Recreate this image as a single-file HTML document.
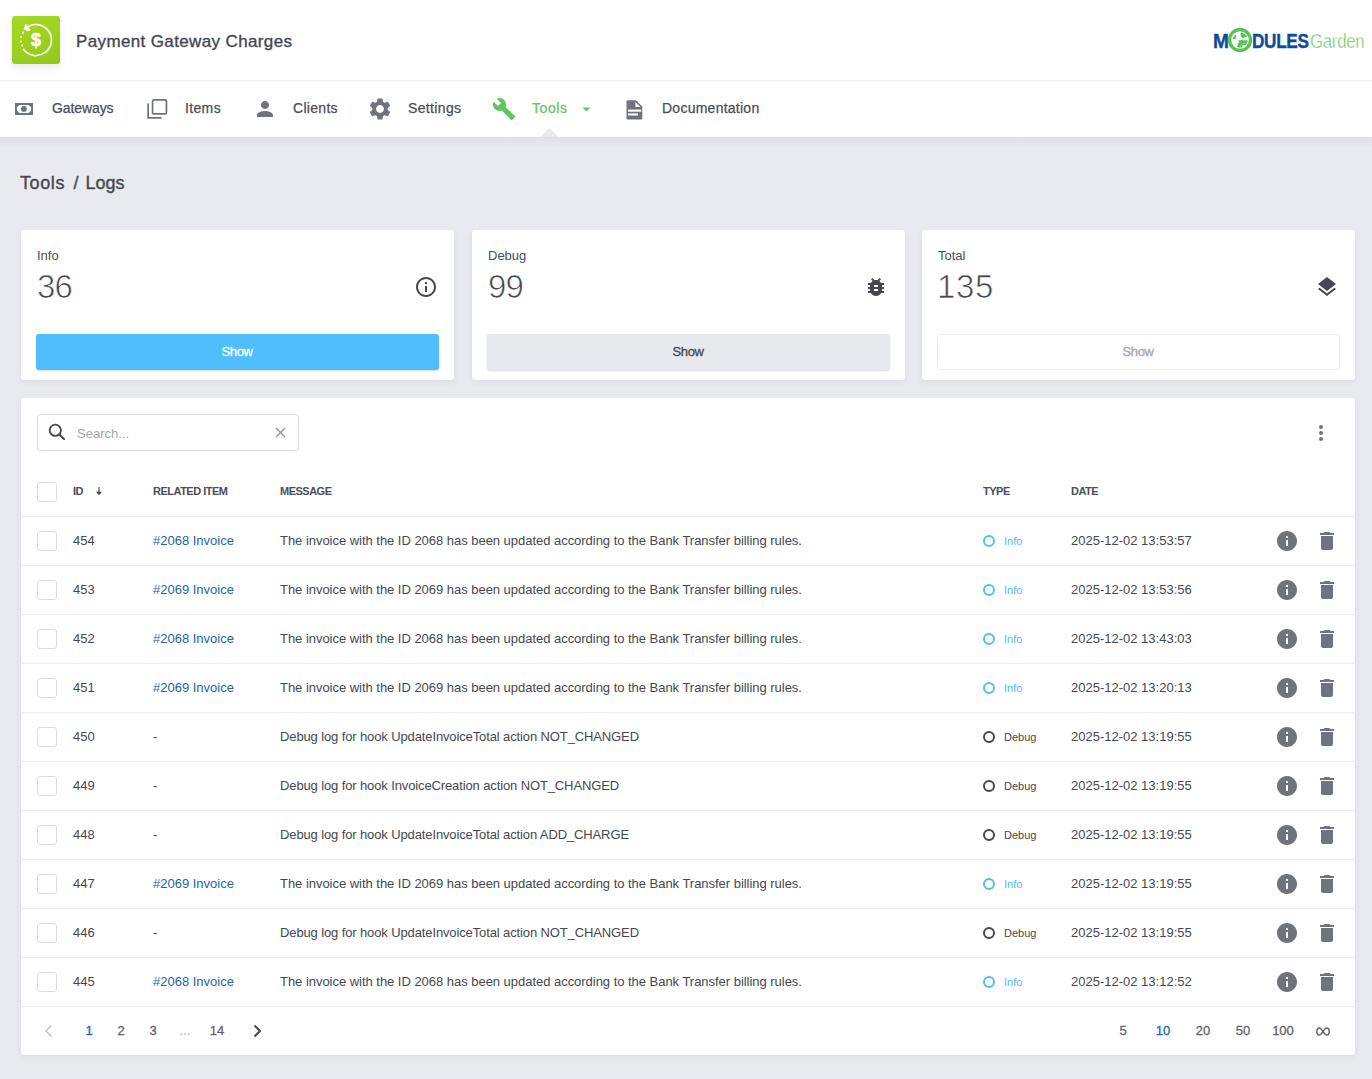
<!DOCTYPE html>
<html><head><meta charset="utf-8">
<style>
*{box-sizing:border-box;margin:0;padding:0}
html,body{width:1372px;height:1079px;overflow:hidden}
body{background:#e9eaef;font-family:"Liberation Sans",sans-serif;color:#45484f;position:relative}
.abs{position:absolute}
.t{position:absolute;white-space:nowrap;line-height:1}
#hdr{position:absolute;left:0;top:0;width:1372px;height:81px;background:#fff;border-bottom:1px solid #ececf0}
#nav{position:absolute;left:0;top:81px;width:1372px;height:56px;background:#fff}
.logo{position:absolute;left:12px;top:16px;width:48px;height:48px;border-radius:3px;background:linear-gradient(160deg,#a6da22,#92c81d);box-shadow:0 4px 8px rgba(0,0,0,.08)}
.nav-t{font-size:14px;color:#4b4e57;-webkit-text-stroke:0.25px currentColor;letter-spacing:-0.1px}
.med{-webkit-text-stroke:0.35px currentColor}
.ico{position:absolute;fill:#6f737c}
.card{position:absolute;top:230px;width:433px;height:150px;background:#fff;border-radius:3px;box-shadow:0 2px 7px rgba(30,35,60,.06)}
.card .lbl{position:absolute;left:16px;top:19px;font-size:13px;color:#4b4e57;line-height:1}
.card .num{position:absolute;left:16px;top:40px;font-size:33px;color:#45484f;line-height:1;letter-spacing:-0.9px;-webkit-text-stroke:0.7px #fff}
.btn{position:absolute;left:15px;top:104px;width:403px;height:36px;border-radius:3px;font-size:13px;text-align:center;line-height:35px;letter-spacing:-0.35px;text-indent:-1px;-webkit-text-stroke:0.3px currentColor}
#tbl{position:absolute;left:21px;top:398px;width:1334px;height:657px;background:#fff;border-radius:3px;box-shadow:0 2px 6px rgba(0,0,0,.06)}
.row{position:absolute;left:0;width:1334px;height:49px;border-top:1px solid #ebecf0}
.cb{position:absolute;left:16px;width:20px;height:20px;border:1px solid #dcdde4;border-radius:3px;background:#fff}
.th{font-size:11px;font-weight:bold;color:#4b4e57;letter-spacing:-0.5px}
.td{font-size:13px;color:#45484f}
.lnk{color:#1f64ad}
.search{position:absolute;left:16px;top:16px;width:262px;height:37px;border:1px solid #dadce3;border-radius:3px}
.row .t.td{top:17px}
.c-id{left:52px}.c-rel{left:132px}.c-msg{left:259px;letter-spacing:-0.03px}.c-date{left:1050px}
.row .cb{top:14px}
.ai{position:absolute;top:12px;fill:#6f737c}
.ty{position:absolute;left:962px;top:18px}
.ty i{position:absolute;left:0;top:0;width:12px;height:12px;border-radius:50%;border:2px solid #50bdfd}
.ty span{position:absolute;left:21px;top:1px;font-size:11px;line-height:1;white-space:nowrap}
.ty-info span{color:#50bdfd}
.ty-dbg i{border-color:#45484f}
.ty-dbg span{color:#45484f}
.pg{top:17px;width:32px;text-align:center;font-size:13px;color:#5f636b;-webkit-text-stroke:0.3px currentColor}
</style></head><body>
<div id="hdr">
  <div class="logo"><svg width="48" height="48" viewBox="0 0 48 48">
<path d="M13.63 12.48A15.5 15.5 0 1 1 11.19 32.73" fill="none" stroke="#fff" stroke-width="1.7"/>
<path d="M13.8 8.3L12.2 13.4 17.9 14.5Z" fill="#fff" stroke="#fff" stroke-width="1.2" stroke-linejoin="round"/>
<circle cx="11" cy="16.7" r="1.1" fill="#fff"/><circle cx="9.1" cy="21" r="1.1" fill="#fff"/><circle cx="9.1" cy="25.5" r="1.1" fill="#fff"/><circle cx="10.3" cy="29.5" r="1.1" fill="#fff"/>
<text x="24" y="30.4" text-anchor="middle" font-family="Liberation Sans" font-weight="bold" font-size="18" fill="#fff" stroke="#fff" stroke-width="0.5">$</text>
</svg></div>
  <div class="t med" style="left:76px;top:33px;font-size:17px;letter-spacing:0.37px;color:#45484f">Payment Gateway Charges</div>
<div class="abs" style="left:1213px;top:27px;width:152px;height:27px">
  <div class="t" style="left:0;top:4px;font-size:20px;font-weight:bold;color:#0f4a9a;transform:scaleX(0.95);transform-origin:0 0;-webkit-text-stroke:0.4px currentColor">M</div>
  <svg class="abs" style="left:15px;top:1.4px" width="24" height="24" viewBox="0 0 24 24"><circle cx="12" cy="12" r="10.5" fill="#fff" stroke="#55c455" stroke-width="3.35"/><path d="M7.2 6.4L8.3 7 8 9 8.2 10.4 7 10.8 5.6 11.6 4.8 10.6 5.8 8.8Z" fill="#55c455"/><path d="M12.2 4.8L14 4.6 16.4 5.8 18.6 7.6 19 9.2 17.4 9.1 15.4 9.8 14.4 10.4 14 8.8 12.6 8.4 12.8 6.6Z" fill="#55c455"/><path d="M10.6 12L12.2 12.4 14 11.5 15.5 12.6 17.2 12.2 19.7 12.3 19 15.6 17.6 17.2 15.4 17 14 18.4 13.8 19.4 10.6 19.6 9.1 18.9 9.6 17.4 9.8 15 11 14.8Z" fill="#55c455"/><path d="M12.4 19.2Q12.6 15.6 17.6 15.2" fill="none" stroke="#aee3ad" stroke-width=".6"/></svg>
  <div class="t" style="left:39px;top:4px;font-size:20px;font-weight:bold;color:#0f4a9a;letter-spacing:-0.4px;transform:scaleX(0.86);transform-origin:0 0;-webkit-text-stroke:0.4px currentColor">DULES</div>
  <div class="t" style="left:97px;top:4.5px;font-size:19.5px;color:#5ec45e;letter-spacing:-0.3px;transform:scaleX(0.86);transform-origin:0 0;-webkit-text-stroke:0.45px #fff">Garden</div>
</div>
</div>
<div id="nav">
  <div class="t nav-t" style="left:52px;top:20px">Gateways</div>
  <div class="t nav-t" style="left:185px;top:20px;letter-spacing:0.35px">Items</div>
  <div class="t nav-t" style="left:293px;top:20px;letter-spacing:0.3px">Clients</div>
  <div class="t nav-t" style="left:408px;top:20px;letter-spacing:0.35px">Settings</div>
  <div class="t nav-t" style="left:532px;top:20px;color:#62c462;letter-spacing:0.6px">Tools</div>
  <div class="t nav-t" style="left:662px;top:20px;letter-spacing:0.25px">Documentation</div>
  <svg class="abs" style="left:15px;top:22px" width="18" height="12" viewBox="0 0 18 12"><rect width="18" height="12" fill="#6f737c"/><path d="M4.3 1.9H13.7L16.1 4.5V7.4L13.7 10H4.3L1.9 7.4V4.5Z" fill="#fff"/><circle cx="8.9" cy="5.9" r="2.9" fill="#6f737c"/></svg>
  <svg class="abs" style="left:146px;top:17px" width="23" height="22" viewBox="0 0 23 22"><rect x="6.55" y="1.95" width="13.9" height="14" rx="1.3" fill="none" stroke="#6f737c" stroke-width="1.7"/><path d="M2.15 5.5V19.8H15.5" fill="none" stroke="#6f737c" stroke-width="1.7"/></svg>
  <svg class="abs" style="left:253px;top:16px" width="24" height="24" viewBox="0 0 24 24" fill="#6f737c"><path d="M12 12c2.21 0 4-1.79 4-4s-1.79-4-4-4-4 1.79-4 4 1.79 4 4 4zm0 2c-2.67 0-8 1.34-8 4v2h16v-2c0-2.66-5.33-4-8-4z"/></svg>
  <svg class="abs" style="left:367px;top:15px" width="26" height="26" viewBox="0 0 24 24" fill="#6f737c"><path d="M19.14 12.94c.04-.3.06-.61.06-.94 0-.32-.02-.64-.07-.94l2.03-1.58c.18-.14.23-.41.12-.61l-1.92-3.32c-.12-.22-.37-.29-.59-.22l-2.39.96c-.5-.38-1.03-.7-1.62-.94l-.36-2.54c-.04-.24-.24-.41-.48-.41h-3.84c-.24 0-.43.17-.47.41l-.36 2.54c-.59.24-1.13.57-1.62.94l-2.39-.96c-.22-.08-.47 0-.59.22L2.74 8.87c-.12.21-.08.47.12.61l2.03 1.58c-.05.3-.09.63-.09.94s.02.64.07.94l-2.03 1.58c-.18.14-.23.41-.12.61l1.92 3.32c.12.22.37.29.59.22l2.39-.96c.5.38 1.03.7 1.62.94l.36 2.54c.05.24.24.41.48.41h3.840c.24 0 .44-.17.47-.41l.36-2.54c.59-.24 1.13-.56 1.62-.94l2.39.96c.22.08.47 0 .59-.22l1.92-3.32c.12-.22.07-.47-.12-.61l-2.01-1.58zM12 15.6c-1.98 0-3.6-1.62-3.6-3.6s1.62-3.6 3.6-3.6 3.6 1.62 3.6 3.6-1.62 3.6-3.6 3.6z"/></svg>
  <svg class="abs" style="left:491.5px;top:16px" width="24" height="24" viewBox="0 0 24 24" fill="#62c462"><path d="M22.7 19l-9.1-9.1c.9-2.3.4-5-1.5-6.9-2-2-5-2.4-7.4-1.3L9 6 6 9 1.6 4.7C.4 7.1.9 10.1 2.9 12.1c1.9 1.9 4.6 2.4 6.9 1.5l9.1 9.1c.4.4 1 .4 1.4 0l2.3-2.3c.5-.4.5-1.1.1-1.4z"/></svg>
  <svg class="abs" style="left:582px;top:26px" width="9" height="5" viewBox="0 0 9 5"><path d="M0.5 0.5h8L4.5 4.5z" fill="#62c462"/></svg>
  <svg class="abs" style="left:626px;top:18.5px" width="17" height="20" viewBox="0 0 17 20"><path d="M0.5 1.6Q0.5 0.3 1.8 0.3H9.9L16.3 6.6V18.3Q16.3 19.6 15 19.6H1.8Q0.5 19.6 0.5 18.3Z" fill="#6f737c"/><path d="M9.4 1.9V6.9H14.6Z" fill="#fff"/><rect x="2.1" y="9.6" width="13.2" height="2.1" fill="#fff"/><rect x="2.1" y="13.4" width="9.9" height="2.1" fill="#fff"/></svg>
</div>
<div class="abs" style="left:0;top:137px;width:1372px;height:10px;background:linear-gradient(rgba(40,45,70,.055),rgba(40,45,70,0))"></div>
<svg class="abs" style="left:539.5px;top:129px" width="19" height="8" viewBox="0 0 19 8"><path d="M0 8L8.1 0.6Q9.5 -0.5 10.9 0.6L19 8z" fill="#e9eaef"/></svg>

<div class="t med" style="left:20px;top:174px;font-size:18px;color:#45484f;letter-spacing:0.6px">Tools</div><div class="t med" style="left:73.5px;top:174px;font-size:18px;color:#45484f">/</div><div class="t med" style="left:85.5px;top:174px;font-size:18px;color:#45484f">Logs</div>

<div class="card" style="left:21px">
  <div class="lbl">Info</div>
  <div class="num">36</div>
  <svg class="abs" style="left:393px;top:45px" width="24" height="24" viewBox="0 0 24 24" fill="#45484f"><path d="M11 17h2v-6h-2v6zm1-15C6.48 2 2 6.48 2 12s4.48 10 10 10 10-4.48 10-10S17.52 2 12 2zm0 18c-4.41 0-8-3.59-8-8s3.59-8 8-8 8 3.59 8 8-3.59 8-8 8zM11 9h2V7h-2v2z"/></svg>
  <div class="btn" style="background:#50bdfd;color:#fff;box-shadow:0 1px 2px rgba(0,0,0,.15)">Show</div>
</div>
<div class="card" style="left:472px">
  <div class="lbl">Debug</div>
  <div class="num">99</div>
  <svg class="abs" style="left:392px;top:45px" width="24" height="24" viewBox="0 0 24 24" fill="#45484f"><path d="M20 8h-2.81c-.45-.78-1.07-1.45-1.82-1.96L17 4.41 15.59 3l-2.17 2.17C12.96 5.06 12.49 5 12 5c-.49 0-.96.06-1.41.17L8.41 3 7 4.41l1.62 1.63C7.88 6.55 7.26 7.22 6.81 8H4v2h2.09c-.05.33-.09.66-.09 1v1H4v2h2v1c0 .34.04.67.09 1H4v2h2.81c1.04 1.79 2.97 3 5.19 3s4.15-1.21 5.19-3H20v-2h-2.09c.05-.33.09-.66.09-1v-1h2v-2h-2v-1c0-.34-.04-.67-.09-1H20V8zm-6 8h-4v-2h4v2zm0-4h-4v-2h4v2z"/></svg>
  <div class="btn" style="background:#e8e9ef;color:#45484f;box-shadow:0 1px 2px rgba(0,0,0,.15)">Show</div>
</div>
<div class="card" style="left:922px">
  <div class="lbl">Total</div>
  <div class="num" style="left:15px;letter-spacing:0.6px">135</div>
  <svg class="abs" style="left:393px;top:45px" width="24" height="24" viewBox="0 0 24 24" fill="#45484f"><path d="M11.99 18.54l-7.37-5.73L3 14.07l9 7 9-7-1.63-1.27-7.38 5.74zM12 16l7.36-5.73L21 9l-9-7-9 7 1.63 1.27L12 16z"/></svg>
  <div class="btn" style="background:#fff;color:#a6a8ae;border:1px solid #ebecf0;line-height:33px">Show</div>
</div>

<div id="tbl">
  <div class="search"><svg class="abs" style="left:10px;top:8px" width="18" height="18" viewBox="0 0 18 18"><circle cx="7.3" cy="7.3" r="5.6" fill="none" stroke="#45484f" stroke-width="1.8"/><path d="M11.4 11.4l4.6 4.6" stroke="#45484f" stroke-width="2.1" stroke-linecap="round"/></svg>
    <div class="t" style="left:39px;top:12px;font-size:13px;color:#a3a6ad">Search...</div>
    <svg class="abs" style="left:237px;top:12px" width="11" height="11" viewBox="0 0 11 11"><path d="M1 1l9 9M10 1l-9 9" stroke="#8a8d96" stroke-width="1.15"/></svg>
  </div>
  <svg class="abs" style="left:1288px;top:23px" width="24" height="24" viewBox="0 0 24 24" fill="#6f737c"><circle cx="12" cy="6" r="2"/><circle cx="12" cy="12" r="2"/><circle cx="12" cy="18" r="2"/></svg>
  <div class="cb" style="top:84px"></div>
  <div class="t th" style="left:52px;top:88px">ID</div>
  <svg class="abs" style="left:75px;top:89px" width="6" height="9" viewBox="0 0 6 9"><path d="M3 0v5.5" stroke="#45484f" stroke-width="1.1"/><path d="M0 4.8h6L3 8.2z" fill="#45484f"/></svg>
  <div class="t th" style="left:132px;top:88px">RELATED ITEM</div>
  <div class="t th" style="left:259px;top:88px">MESSAGE</div>
  <div class="t th" style="left:962px;top:88px">TYPE</div>
  <div class="t th" style="left:1050px;top:88px">DATE</div>
<div class="row" style="top:118px">
<div class="cb"></div>
<div class="t td c-id">454</div>
<div class="t td c-rel"><span class="lnk">#2068 Invoice</span></div>
<div class="t td c-msg">The invoice with the ID 2068 has been updated according to the Bank Transfer billing rules.</div>
<div class="ty ty-info"><i></i><span>Info</span></div>
<div class="t td c-date">2025-12-02 13:53:57</div>
<svg class="ai" style="left:1254px" width="24" height="24" viewBox="0 0 24 24"><path d="M12 2C6.48 2 2 6.48 2 12s4.48 10 10 10 10-4.48 10-10S17.52 2 12 2zm1 15h-2v-6h2v6zm0-8h-2V7h2v2z"/></svg><svg class="ai" style="left:1294px" width="24" height="24" viewBox="0 0 24 24"><path d="M6 19c0 1.1.9 2 2 2h8c1.1 0 2-.9 2-2V7H6v12zM19 4h-3.5l-1-1h-5l-1 1H5v2h14V4z"/></svg>
</div>
<div class="row" style="top:167px">
<div class="cb"></div>
<div class="t td c-id">453</div>
<div class="t td c-rel"><span class="lnk">#2069 Invoice</span></div>
<div class="t td c-msg">The invoice with the ID 2069 has been updated according to the Bank Transfer billing rules.</div>
<div class="ty ty-info"><i></i><span>Info</span></div>
<div class="t td c-date">2025-12-02 13:53:56</div>
<svg class="ai" style="left:1254px" width="24" height="24" viewBox="0 0 24 24"><path d="M12 2C6.48 2 2 6.48 2 12s4.48 10 10 10 10-4.48 10-10S17.52 2 12 2zm1 15h-2v-6h2v6zm0-8h-2V7h2v2z"/></svg><svg class="ai" style="left:1294px" width="24" height="24" viewBox="0 0 24 24"><path d="M6 19c0 1.1.9 2 2 2h8c1.1 0 2-.9 2-2V7H6v12zM19 4h-3.5l-1-1h-5l-1 1H5v2h14V4z"/></svg>
</div>
<div class="row" style="top:216px">
<div class="cb"></div>
<div class="t td c-id">452</div>
<div class="t td c-rel"><span class="lnk">#2068 Invoice</span></div>
<div class="t td c-msg">The invoice with the ID 2068 has been updated according to the Bank Transfer billing rules.</div>
<div class="ty ty-info"><i></i><span>Info</span></div>
<div class="t td c-date">2025-12-02 13:43:03</div>
<svg class="ai" style="left:1254px" width="24" height="24" viewBox="0 0 24 24"><path d="M12 2C6.48 2 2 6.48 2 12s4.48 10 10 10 10-4.48 10-10S17.52 2 12 2zm1 15h-2v-6h2v6zm0-8h-2V7h2v2z"/></svg><svg class="ai" style="left:1294px" width="24" height="24" viewBox="0 0 24 24"><path d="M6 19c0 1.1.9 2 2 2h8c1.1 0 2-.9 2-2V7H6v12zM19 4h-3.5l-1-1h-5l-1 1H5v2h14V4z"/></svg>
</div>
<div class="row" style="top:265px">
<div class="cb"></div>
<div class="t td c-id">451</div>
<div class="t td c-rel"><span class="lnk">#2069 Invoice</span></div>
<div class="t td c-msg">The invoice with the ID 2069 has been updated according to the Bank Transfer billing rules.</div>
<div class="ty ty-info"><i></i><span>Info</span></div>
<div class="t td c-date">2025-12-02 13:20:13</div>
<svg class="ai" style="left:1254px" width="24" height="24" viewBox="0 0 24 24"><path d="M12 2C6.48 2 2 6.48 2 12s4.48 10 10 10 10-4.48 10-10S17.52 2 12 2zm1 15h-2v-6h2v6zm0-8h-2V7h2v2z"/></svg><svg class="ai" style="left:1294px" width="24" height="24" viewBox="0 0 24 24"><path d="M6 19c0 1.1.9 2 2 2h8c1.1 0 2-.9 2-2V7H6v12zM19 4h-3.5l-1-1h-5l-1 1H5v2h14V4z"/></svg>
</div>
<div class="row" style="top:314px">
<div class="cb"></div>
<div class="t td c-id">450</div>
<div class="t td c-rel">-</div>
<div class="t td c-msg" style="letter-spacing:-0.12px">Debug log for hook UpdateInvoiceTotal action NOT_CHANGED</div>
<div class="ty ty-dbg"><i></i><span>Debug</span></div>
<div class="t td c-date">2025-12-02 13:19:55</div>
<svg class="ai" style="left:1254px" width="24" height="24" viewBox="0 0 24 24"><path d="M12 2C6.48 2 2 6.48 2 12s4.48 10 10 10 10-4.48 10-10S17.52 2 12 2zm1 15h-2v-6h2v6zm0-8h-2V7h2v2z"/></svg><svg class="ai" style="left:1294px" width="24" height="24" viewBox="0 0 24 24"><path d="M6 19c0 1.1.9 2 2 2h8c1.1 0 2-.9 2-2V7H6v12zM19 4h-3.5l-1-1h-5l-1 1H5v2h14V4z"/></svg>
</div>
<div class="row" style="top:363px">
<div class="cb"></div>
<div class="t td c-id">449</div>
<div class="t td c-rel">-</div>
<div class="t td c-msg" style="letter-spacing:-0.12px">Debug log for hook InvoiceCreation action NOT_CHANGED</div>
<div class="ty ty-dbg"><i></i><span>Debug</span></div>
<div class="t td c-date">2025-12-02 13:19:55</div>
<svg class="ai" style="left:1254px" width="24" height="24" viewBox="0 0 24 24"><path d="M12 2C6.48 2 2 6.48 2 12s4.48 10 10 10 10-4.48 10-10S17.52 2 12 2zm1 15h-2v-6h2v6zm0-8h-2V7h2v2z"/></svg><svg class="ai" style="left:1294px" width="24" height="24" viewBox="0 0 24 24"><path d="M6 19c0 1.1.9 2 2 2h8c1.1 0 2-.9 2-2V7H6v12zM19 4h-3.5l-1-1h-5l-1 1H5v2h14V4z"/></svg>
</div>
<div class="row" style="top:412px">
<div class="cb"></div>
<div class="t td c-id">448</div>
<div class="t td c-rel">-</div>
<div class="t td c-msg" style="letter-spacing:-0.12px">Debug log for hook UpdateInvoiceTotal action ADD_CHARGE</div>
<div class="ty ty-dbg"><i></i><span>Debug</span></div>
<div class="t td c-date">2025-12-02 13:19:55</div>
<svg class="ai" style="left:1254px" width="24" height="24" viewBox="0 0 24 24"><path d="M12 2C6.48 2 2 6.48 2 12s4.48 10 10 10 10-4.48 10-10S17.52 2 12 2zm1 15h-2v-6h2v6zm0-8h-2V7h2v2z"/></svg><svg class="ai" style="left:1294px" width="24" height="24" viewBox="0 0 24 24"><path d="M6 19c0 1.1.9 2 2 2h8c1.1 0 2-.9 2-2V7H6v12zM19 4h-3.5l-1-1h-5l-1 1H5v2h14V4z"/></svg>
</div>
<div class="row" style="top:461px">
<div class="cb"></div>
<div class="t td c-id">447</div>
<div class="t td c-rel"><span class="lnk">#2069 Invoice</span></div>
<div class="t td c-msg">The invoice with the ID 2069 has been updated according to the Bank Transfer billing rules.</div>
<div class="ty ty-info"><i></i><span>Info</span></div>
<div class="t td c-date">2025-12-02 13:19:55</div>
<svg class="ai" style="left:1254px" width="24" height="24" viewBox="0 0 24 24"><path d="M12 2C6.48 2 2 6.48 2 12s4.48 10 10 10 10-4.48 10-10S17.52 2 12 2zm1 15h-2v-6h2v6zm0-8h-2V7h2v2z"/></svg><svg class="ai" style="left:1294px" width="24" height="24" viewBox="0 0 24 24"><path d="M6 19c0 1.1.9 2 2 2h8c1.1 0 2-.9 2-2V7H6v12zM19 4h-3.5l-1-1h-5l-1 1H5v2h14V4z"/></svg>
</div>
<div class="row" style="top:510px">
<div class="cb"></div>
<div class="t td c-id">446</div>
<div class="t td c-rel">-</div>
<div class="t td c-msg" style="letter-spacing:-0.12px">Debug log for hook UpdateInvoiceTotal action NOT_CHANGED</div>
<div class="ty ty-dbg"><i></i><span>Debug</span></div>
<div class="t td c-date">2025-12-02 13:19:55</div>
<svg class="ai" style="left:1254px" width="24" height="24" viewBox="0 0 24 24"><path d="M12 2C6.48 2 2 6.48 2 12s4.48 10 10 10 10-4.48 10-10S17.52 2 12 2zm1 15h-2v-6h2v6zm0-8h-2V7h2v2z"/></svg><svg class="ai" style="left:1294px" width="24" height="24" viewBox="0 0 24 24"><path d="M6 19c0 1.1.9 2 2 2h8c1.1 0 2-.9 2-2V7H6v12zM19 4h-3.5l-1-1h-5l-1 1H5v2h14V4z"/></svg>
</div>
<div class="row" style="top:559px">
<div class="cb"></div>
<div class="t td c-id">445</div>
<div class="t td c-rel"><span class="lnk">#2068 Invoice</span></div>
<div class="t td c-msg">The invoice with the ID 2068 has been updated according to the Bank Transfer billing rules.</div>
<div class="ty ty-info"><i></i><span>Info</span></div>
<div class="t td c-date">2025-12-02 13:12:52</div>
<svg class="ai" style="left:1254px" width="24" height="24" viewBox="0 0 24 24"><path d="M12 2C6.48 2 2 6.48 2 12s4.48 10 10 10 10-4.48 10-10S17.52 2 12 2zm1 15h-2v-6h2v6zm0-8h-2V7h2v2z"/></svg><svg class="ai" style="left:1294px" width="24" height="24" viewBox="0 0 24 24"><path d="M6 19c0 1.1.9 2 2 2h8c1.1 0 2-.9 2-2V7H6v12zM19 4h-3.5l-1-1h-5l-1 1H5v2h14V4z"/></svg>
</div>
  <div class="row" style="top:608px">
    <svg class="abs" style="left:20px;top:16px" width="16" height="16" viewBox="0 0 16 16"><path d="M10.5 2.5L5 8l5.5 5.5" fill="none" stroke="#c3c5cb" stroke-width="1.6"/></svg>
    <div class="t pg" style="left:52px;color:#1f64ad">1</div>
    <div class="t pg" style="left:84px">2</div>
    <div class="t pg" style="left:116px">3</div>
    <div class="t pg" style="left:148px;color:#c3c5cb">...</div>
    <div class="t pg" style="left:180px">14</div>
    <svg class="abs" style="left:228px;top:16px" width="16" height="16" viewBox="0 0 16 16"><path d="M5.5 2.5L11 8l-5.5 5.5" fill="none" stroke="#45484f" stroke-width="2"/></svg>
    <div class="t pg" style="left:1082px;width:40px">5</div>
    <div class="t pg" style="left:1122px;width:40px;color:#1f64ad">10</div>
    <div class="t pg" style="left:1162px;width:40px">20</div>
    <div class="t pg" style="left:1202px;width:40px">50</div>
    <div class="t pg" style="left:1242px;width:40px">100</div>
    <svg class="abs" style="left:1295px;top:20px" width="14" height="9" viewBox="0 0 14 9"><path d="M7 4.5C5.6 2.4 4.6 1 3.3 1 1.9 1 .8 2.5.8 4.5S1.9 8 3.3 8C4.6 8 5.6 6.6 7 4.5S9.4 1 10.7 1c1.4 0 2.5 1.5 2.5 3.5S12.1 8 10.7 8C9.4 8 8.4 6.6 7 4.5z" fill="none" stroke="#5f636b" stroke-width="1.4"/></svg>
  </div>
</div>
</body></html>
